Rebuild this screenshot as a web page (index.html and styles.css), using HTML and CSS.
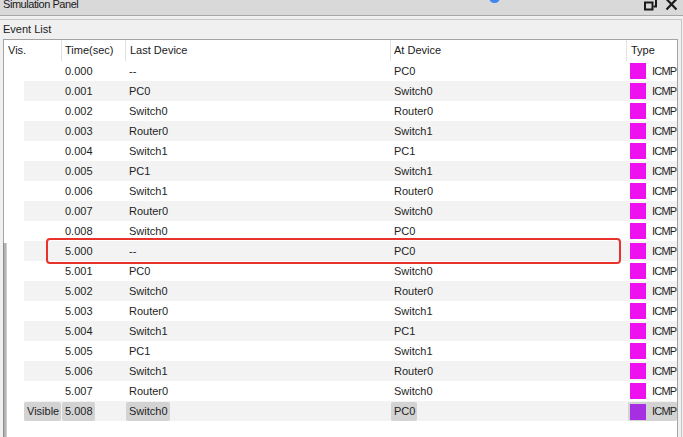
FILE: index.html
```html
<!DOCTYPE html>
<html>
<head>
<meta charset="utf-8">
<link rel="stylesheet" href="styles.css">
</head>
<body>
<div class="titlebar">
  <span class="title">Simulation Panel</span>
  <span class="blue-dot"></span>
  <span class="controls">
    <svg class="ico-restore" width="13" height="11" viewBox="0 0 13 11"><path d="M4 -1 H12 V6.5 H9.5" fill="none" stroke="#1b1b1b" stroke-width="2"/><rect x="1" y="2.5" width="7.5" height="7" fill="none" stroke="#1b1b1b" stroke-width="2"/></svg>
    <svg class="ico-close" width="13" height="11" viewBox="0 0 13 11"><path d="M1.5 -1 L11.5 9.5 M11.5 -1 L1.5 9.5" fill="none" stroke="#1b1b1b" stroke-width="2.2"/></svg>
  </span>
</div>
<div class="group">
  <div class="group-label">Event List</div>
  <div class="table">
    <div class="thead">
      <div class="th vis">Vis.</div>
      <div class="th">Time(sec)</div>
      <div class="th">Last Device</div>
      <div class="th">At Device</div>
      <div class="th type-h">Type</div>
    </div>
    <div class="row"><div class="c"></div><div class="c">0.000</div><div class="c">--</div><div class="c">PC0</div><div class="c t"><span class="sq"></span><span class="proto">ICMP</span></div></div>
    <div class="row alt"><div class="c"></div><div class="c">0.001</div><div class="c">PC0</div><div class="c">Switch0</div><div class="c t"><span class="sq"></span><span class="proto">ICMP</span></div></div>
    <div class="row"><div class="c"></div><div class="c">0.002</div><div class="c">Switch0</div><div class="c">Router0</div><div class="c t"><span class="sq"></span><span class="proto">ICMP</span></div></div>
    <div class="row alt"><div class="c"></div><div class="c">0.003</div><div class="c">Router0</div><div class="c">Switch1</div><div class="c t"><span class="sq"></span><span class="proto">ICMP</span></div></div>
    <div class="row"><div class="c"></div><div class="c">0.004</div><div class="c">Switch1</div><div class="c">PC1</div><div class="c t"><span class="sq"></span><span class="proto">ICMP</span></div></div>
    <div class="row alt"><div class="c"></div><div class="c">0.005</div><div class="c">PC1</div><div class="c">Switch1</div><div class="c t"><span class="sq"></span><span class="proto">ICMP</span></div></div>
    <div class="row"><div class="c"></div><div class="c">0.006</div><div class="c">Switch1</div><div class="c">Router0</div><div class="c t"><span class="sq"></span><span class="proto">ICMP</span></div></div>
    <div class="row alt"><div class="c"></div><div class="c">0.007</div><div class="c">Router0</div><div class="c">Switch0</div><div class="c t"><span class="sq"></span><span class="proto">ICMP</span></div></div>
    <div class="row"><div class="c"></div><div class="c">0.008</div><div class="c">Switch0</div><div class="c">PC0</div><div class="c t"><span class="sq"></span><span class="proto">ICMP</span></div></div>
    <div class="row alt"><div class="c"></div><div class="c">5.000</div><div class="c">--</div><div class="c">PC0</div><div class="c t"><span class="sq"></span><span class="proto">ICMP</span></div></div>
    <div class="row"><div class="c"></div><div class="c">5.001</div><div class="c">PC0</div><div class="c">Switch0</div><div class="c t"><span class="sq"></span><span class="proto">ICMP</span></div></div>
    <div class="row alt"><div class="c"></div><div class="c">5.002</div><div class="c">Switch0</div><div class="c">Router0</div><div class="c t"><span class="sq"></span><span class="proto">ICMP</span></div></div>
    <div class="row"><div class="c"></div><div class="c">5.003</div><div class="c">Router0</div><div class="c">Switch1</div><div class="c t"><span class="sq"></span><span class="proto">ICMP</span></div></div>
    <div class="row alt"><div class="c"></div><div class="c">5.004</div><div class="c">Switch1</div><div class="c">PC1</div><div class="c t"><span class="sq"></span><span class="proto">ICMP</span></div></div>
    <div class="row"><div class="c"></div><div class="c">5.005</div><div class="c">PC1</div><div class="c">Switch1</div><div class="c t"><span class="sq"></span><span class="proto">ICMP</span></div></div>
    <div class="row alt"><div class="c"></div><div class="c">5.006</div><div class="c">Switch1</div><div class="c">Router0</div><div class="c t"><span class="sq"></span><span class="proto">ICMP</span></div></div>
    <div class="row"><div class="c"></div><div class="c">5.007</div><div class="c">Router0</div><div class="c">Switch0</div><div class="c t"><span class="sq"></span><span class="proto">ICMP</span></div></div>
    <div class="row alt sel"><div class="c"><span class="chip chip-full">Visible</span></div><div class="c"><span class="chip">5.008</span></div><div class="c"><span class="chip">Switch0</span></div><div class="c"><span class="chip">PC0</span></div><div class="c t"><span class="chip chip-type"><span class="sq sq-sel"></span><span class="proto">ICMP</span></span></div></div>
    <div class="highlight"></div>
  </div>
</div>
</body>
</html>
```

FILE: styles.css
```css
html, body {
  margin: 0;
  padding: 0;
  width: 683px;
  height: 437px;
  overflow: hidden;
  background: #f0f0f0;
  font-family: "Liberation Sans", Arial, sans-serif;
  font-size: 11px;
  color: #1e1e1e;
}

.titlebar {
  position: relative;
  display: flex;
  align-items: flex-start;
  height: 15px;
  background: #d9d9d9;
  border-bottom: 1px solid #a6a6a6;
}

.title {
  padding-left: 3px;
  line-height: 11px;
  margin-top: -1px;
  letter-spacing: -0.45px;
  color: #1a1a1a;
}

.blue-dot {
  position: absolute;
  left: 489px;
  top: -8px;
  width: 11px;
  height: 11px;
  border-radius: 50%;
  background: #3d86f0;
}

.controls {
  margin-left: auto;
  display: flex;
  gap: 8px;
  padding-right: 5px;
}

.controls svg {
  display: block;
}

.group {
  margin-top: 3px;
  width: 681px;
  height: 420px;
  border-top: 1px solid #c6c6c6;
  border-right: 1px solid #c6c6c6;
}

.group-label {
  padding-left: 3px;
  height: 19px;
  line-height: 19px;
  color: #1a1a1a;
}

.table {
  position: relative;
  margin-left: 3px;
  width: 673px;
  height: 400px;
  background: #ffffff;
  border: 1px solid #a3a3a3;
  border-bottom: none;
}

.table::before {
  content: "";
  position: absolute;
  left: -1px;
  top: 203px;
  bottom: 0;
  width: 4px;
  background: linear-gradient(to right, #8e8e8e 0 1px, #b2b2b2 1px 3px, #cfcfcf 3px);
}

.thead {
  display: grid;
  grid-template-columns: 58px 64px 265px 236px 50px;
  height: 21px;
  line-height: 21px;
}

.th {
  padding-left: 3px;
  border-right: 1px solid #e2e2e2;
  color: #1a1a1a;
  white-space: nowrap;
}

.th.vis {
  padding-left: 4px;
}

.th:nth-child(3), .th.type-h {
  padding-left: 4px;
}

.th.type-h {
  border-right: none;
}

.row {
  display: grid;
  grid-template-columns: 38px 64px 265px 236px 50px;
  margin-left: 20px;
  height: 20px;
  line-height: 20px;
}

.row.alt {
  background: #f3f3f3;
}

.c {
  padding-left: 3px;
  white-space: nowrap;
}

.c.t {
  display: flex;
  align-items: center;
  gap: 6px;
}

.proto {
  letter-spacing: -0.8px;
}

.sq {
  display: inline-block;
  width: 16px;
  height: 16px;
  background: #ef10ef;
  flex: none;
}

.sel .c {
  padding-left: 0;
}

.chip {
  display: inline-block;
  background: #d3d3d3;
  border-radius: 2px;
  padding: 0 2px 0 3px;
  height: 19px;
  line-height: 19px;
  margin-top: 1px;
  vertical-align: top;
}

.chip-full {
  width: 37px;
  box-sizing: border-box;
}

.sel .c.t {
  display: block;
}

.chip-type {
  display: flex;
  align-items: center;
  gap: 6px;
  margin-left: 1px;
  padding: 0 1px 0 2px;
  height: 19px;
}

.sq-sel {
  background: #a62fe2;
}

.highlight {
  position: absolute;
  left: 42px;
  top: 198px;
  width: 575px;
  height: 26px;
  box-sizing: border-box;
  border: 2px solid #e8332b;
  border-radius: 4px;
}
```
